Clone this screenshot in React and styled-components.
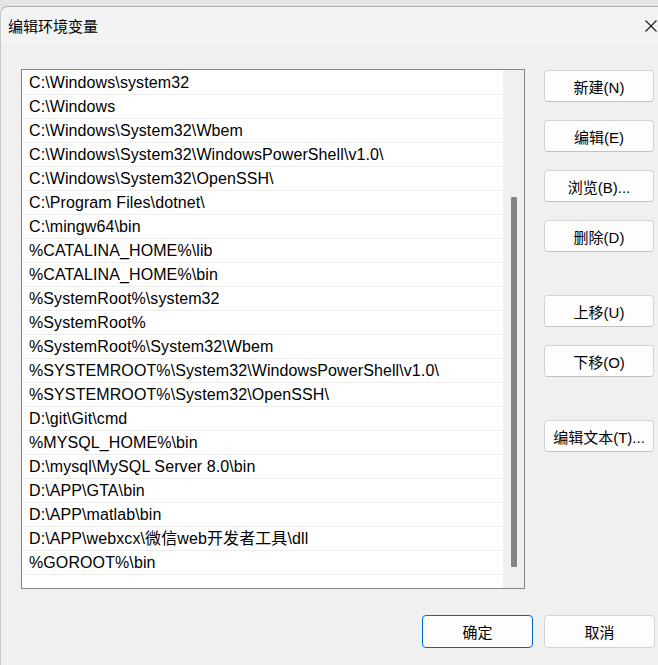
import styled, { createGlobalStyle } from "styled-components";

const paths = [
  "C:\\Windows\\system32",
  "C:\\Windows",
  "C:\\Windows\\System32\\Wbem",
  "C:\\Windows\\System32\\WindowsPowerShell\\v1.0\\",
  "C:\\Windows\\System32\\OpenSSH\\",
  "C:\\Program Files\\dotnet\\",
  "C:\\mingw64\\bin",
  "%CATALINA_HOME%\\lib",
  "%CATALINA_HOME%\\bin",
  "%SystemRoot%\\system32",
  "%SystemRoot%",
  "%SystemRoot%\\System32\\Wbem",
  "%SYSTEMROOT%\\System32\\WindowsPowerShell\\v1.0\\",
  "%SYSTEMROOT%\\System32\\OpenSSH\\",
  "D:\\git\\Git\\cmd",
  "%MYSQL_HOME%\\bin",
  "D:\\mysql\\MySQL Server 8.0\\bin",
  "D:\\APP\\GTA\\bin",
  "D:\\APP\\matlab\\bin",
  "D:\\APP\\webxcx\\微信web开发者工具\\dll",
  "%GOROOT%\\bin",
];

const sideButtons = [
  { label: "新建(N)" },
  { label: "编辑(E)" },
  { label: "浏览(B)..." },
  { label: "删除(D)" },
  { label: "上移(U)", spaced: true },
  { label: "下移(O)" },
  { label: "编辑文本(T)...", spaced: true },
];

export default function App() {
  return (
    <>
      <GlobalStyle />
      <Window>
        <TitleBar>
          <Title>编辑环境变量</Title>
          <CloseIcon viewBox="0 0 12 12">
            <path d="M0.5 0.5 L11.5 11.5 M11.5 0.5 L0.5 11.5" stroke="#1a1a1a" strokeWidth="1.1" fill="none" />
          </CloseIcon>
        </TitleBar>
        <Body>
          <Content>
            <ListBox>
              <Rows>
                {paths.map((p) => (
                  <Row key={p}>{p}</Row>
                ))}
              </Rows>
              <ScrollTrack>
                <Thumb />
              </ScrollTrack>
            </ListBox>
            <SideColumn>
              {sideButtons.map((b) => (
                <Button key={b.label} $spaced={b.spaced}>
                  {b.label}
                </Button>
              ))}
            </SideColumn>
          </Content>
          <Footer>
            <FooterButton $primary>确定</FooterButton>
            <FooterButton>取消</FooterButton>
          </Footer>
        </Body>
      </Window>
    </>
  );
}

const GlobalStyle = createGlobalStyle`
  html, body {
    margin: 0;
    padding: 0;
    background: #e5e5e5;
    overflow: hidden;
  }
  body {
    font-family: "Liberation Sans", "Noto Sans CJK SC", sans-serif;
    color: #000;
  }
`;

const Window = styled.div`
  margin-top: 6px;
  height: 659px;
  box-sizing: border-box;
  border-top: 1px solid #ababab;
  border-left: 1px solid #c8c8c8;
  border-top-left-radius: 8px;
  background: #f0f0f0;
  overflow: hidden;
`;

const TitleBar = styled.div`
  height: 37px;
  background: #f3f3f3;
  border-top-left-radius: 7px;
  display: flex;
  align-items: center;
  justify-content: space-between;
  padding: 0 1px 0 7px;
`;

const Title = styled.span`
  font-size: 15px;
  margin-top: -1px;
`;

const CloseIcon = styled.svg`
  width: 12px;
  height: 12px;
`;

const Body = styled.div`
  padding: 25px 3px 0 20px;
  display: flex;
  flex-direction: column;
`;

const Content = styled.div`
  display: flex;
  gap: 19px;
`;

const ListBox = styled.div`
  width: 504px;
  height: 520px;
  box-sizing: border-box;
  border: 1px solid #82868c;
  background: #fff;
  display: flex;
  overflow: hidden;
`;

const Rows = styled.div`
  width: 481px;
  padding-top: 1px;
`;

const Row = styled.div`
  height: 24px;
  box-sizing: border-box;
  border-bottom: 1px solid #ececec;
  padding: 1px 0 0 7px;
  font-size: 16px;
  line-height: 22px;
  letter-spacing: 0.1px;
  white-space: nowrap;
`;

const ScrollTrack = styled.div`
  flex: 1;
  background: #f0f0f0;
  display: flex;
  justify-content: center;
  padding: 127px 0 21px;
`;

const Thumb = styled.div`
  width: 6px;
  background: #858585;
  border-radius: 1px;
`;

const SideColumn = styled.div`
  display: flex;
  flex-direction: column;
  padding-top: 1px;
`;

const Button = styled.button`
  width: 110px;
  height: 32px;
  margin-top: ${(p) => (p.$spaced ? "43px" : "18px")};
  &:first-child {
    margin-top: 0;
  }
  background: #fdfdfd;
  border: 1px solid #d3d3d3;
  border-bottom-color: #c2c2c2;
  border-radius: 4px;
  font-family: "Liberation Sans", "Noto Sans CJK SC", sans-serif;
  font-size: 15px;
  color: #000;
  padding: 0;
`;

const Footer = styled.div`
  display: flex;
  justify-content: flex-end;
  gap: 11px;
  margin-top: 26px;
`;

const FooterButton = styled.button`
  width: 111px;
  height: 33px;
  background: #fdfdfd;
  border: 1px solid ${(p) => (p.$primary ? "#0067c0" : "#d3d3d3")};
  border-radius: 4px;
  font-family: "Liberation Sans", "Noto Sans CJK SC", sans-serif;
  font-size: 15px;
  color: #000;
  padding: 0;
`;
